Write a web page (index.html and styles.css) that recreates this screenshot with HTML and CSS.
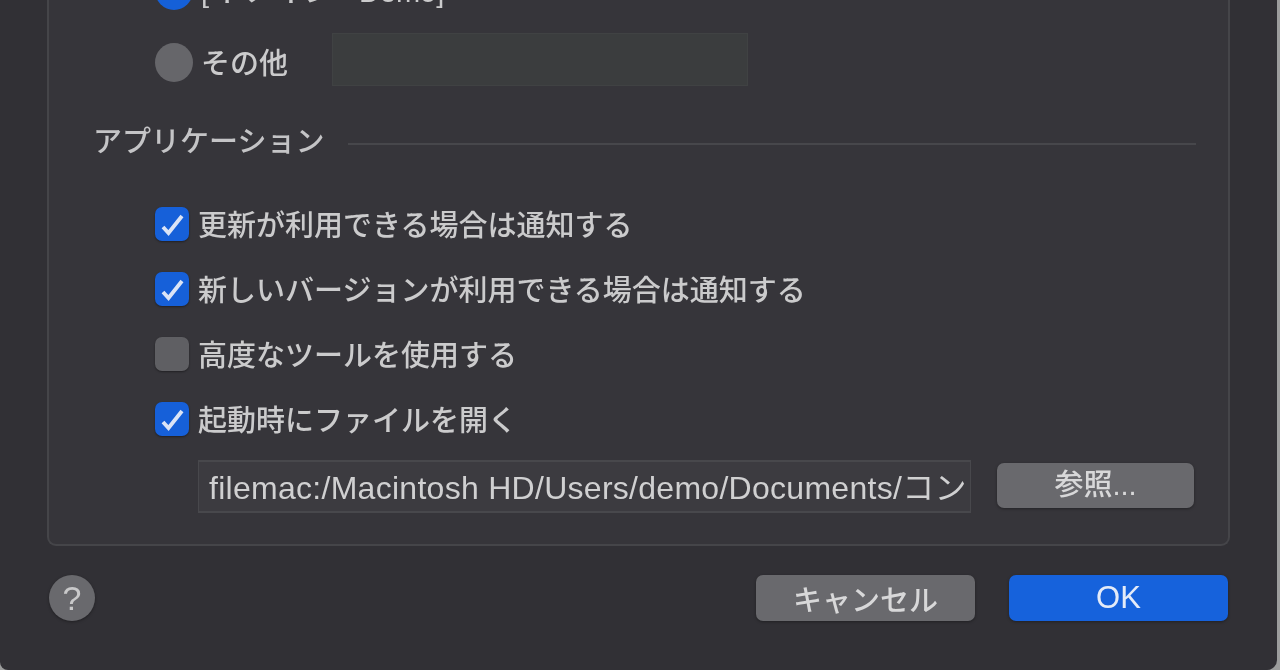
FILE: index.html
```html
<!DOCTYPE html>
<html lang="ja">
<head>
<meta charset="utf-8">
<title>環境設定</title>
<link rel="stylesheet" href="styles.css">
</head>
<body>
<main class="dialog">
  <section class="panel">
    <div class="radio-row radio-row-clipped">
      <span class="radio radio-on"></span>
      <span class="label">[ ドメイン - Demo]</span>
    </div>
    <div class="radio-row">
      <span class="radio"></span>
      <span class="label">その他</span>
      <span class="other-field"></span>
    </div>
    <div class="section-head">
      <span class="section-title">アプリケーション</span>
      <span class="section-rule"></span>
    </div>
    <div class="checks">
      <div class="check-row">
        <span class="check check-on"><svg viewBox="0 0 34 34"><path d="M8 20l5.5 6L27 9" /></svg></span>
        <span class="label">更新が利用できる場合は通知する</span>
      </div>
      <div class="check-row">
        <span class="check check-on"><svg viewBox="0 0 34 34"><path d="M8 20l5.5 6L27 9" /></svg></span>
        <span class="label">新しいバージョンが利用できる場合は通知する</span>
      </div>
      <div class="check-row">
        <span class="check"></span>
        <span class="label">高度なツールを使用する</span>
      </div>
      <div class="check-row">
        <span class="check check-on"><svg viewBox="0 0 34 34"><path d="M8 20l5.5 6L27 9" /></svg></span>
        <span class="label">起動時にファイルを開く</span>
      </div>
    </div>
    <div class="file-row">
      <div class="file-field">filemac:/Macintosh HD/Users/demo/Documents/コン</div>
      <button class="btn btn-browse">参照...</button>
    </div>
  </section>
  <footer class="footer">
    <button class="help">?</button>
    <div class="actions">
      <button class="btn btn-action">キャンセル</button>
      <button class="btn btn-action btn-primary">OK</button>
    </div>
  </footer>
</main>
</body>
</html>
```
FILE: styles.css
```css
* { box-sizing: border-box; }
html, body { margin: 0; height: 100%; background: #9c9d9d; overflow: hidden; }
body { font-family: "Liberation Sans", "Noto Sans CJK JP", sans-serif; color: #cbcbcc; }
.dialog { width: 1277px; height: 670px; background: #313035; border-radius: 0 0 10px 8px; padding: 0 47px 0 47px; overflow: hidden; }
.panel { height: 546px; background: #36353a; border: 2px solid #454549; border-top: 0; border-radius: 0 0 9px 9px; padding: 0 32px 0 44px; overflow: hidden; filter: blur(0.7px); }
.label { font-size: 29px; line-height: 32px; padding-top: 4px; font-weight: 500; white-space: nowrap; }
.radio-row { display: flex; align-items: center; height: 40px; margin-left: 62px; }
.radio-row-clipped { margin-top: -30px; margin-bottom: 32px; }
.radio { width: 38px; height: 39px; border-radius: 50%; background: #66666a; flex: none; margin-right: 8px; }
.radio-on { background: #1560d8; }
.other-field { width: 416px; height: 53px; margin: 0 0 5px 44px; background: #3b3d3e; border: 1px solid #404243; }
.section-head { display: flex; align-items: center; margin-top: 42px; gap: 24px; }
.section-title { font-size: 29px; line-height: 36px; font-weight: 500; color: #c4c4c6; }
.section-rule { flex: 1; height: 2px; background: #47474b; margin-top: 4px; }
.checks { display: flex; flex-direction: column; gap: 31px; margin: 47px 0 0 62px; }
.check-row { display: flex; align-items: center; height: 34px; gap: 9px; }
.check { width: 34px; height: 34px; border-radius: 7px; background: #5f5f63; flex: none; box-shadow: 0 1px 2px rgba(0,0,0,.4); }
.check-on { background: #1660d9; }
.check svg { display: block; width: 100%; height: 100%; fill: none; stroke: #dbe4f6; stroke-width: 3.8; }
.file-row { display: flex; align-items: center; margin: 24px 0 0 105px; }
.file-field { width: 773px; height: 53px; background: #3c3b40; border: 2px solid #48484c; border-width: 2px 1px; padding: 0 9px 0 10px; font-size: 32px; letter-spacing: 0.28px; line-height: 52px; white-space: nowrap; overflow: hidden; color: #d0d0d1; }
.btn { font-family: inherit; font-weight: 500; border: 0; padding: 0; background: #69696d; color: #d8d8d9; border-radius: 7px; box-shadow: 0 1px 3px rgba(0,0,0,.35); }
.btn-browse { width: 197px; height: 45px; margin: 0 0 2px 26px; font-size: 29px; line-height: 45px; }
.footer { display: flex; align-items: center; justify-content: space-between; margin-top: 29px; padding: 0 2px 0 2px; filter: blur(0.7px); }
.help { width: 46px; height: 46px; border: 0; padding: 0; border-radius: 50%; background: #69696d; color: #c9c9ca; font-family: inherit; font-size: 34px; box-shadow: 0 1px 3px rgba(0,0,0,.35); }
.actions { display: flex; gap: 34px; }
.btn-action { width: 219px; height: 46px; font-size: 29px; }
.btn-primary { background: #1662dc; color: #e4ebf8; font-size: 31px; }
```
